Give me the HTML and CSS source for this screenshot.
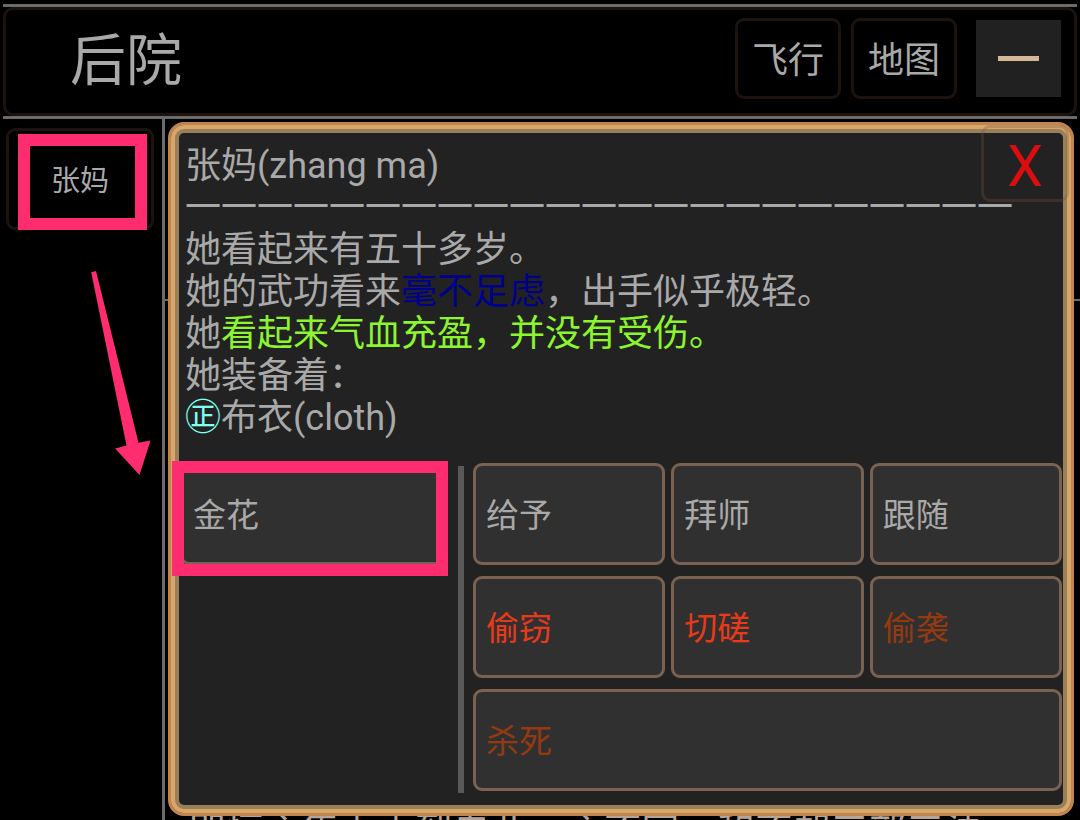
FILE: index.html
```html
<!DOCTYPE html>
<html lang="zh-CN">
<head>
  <meta charset="UTF-8">
  <meta name="viewport" content="width=device-width, initial-scale=1.0">
  <title>后院</title>
  <link rel="stylesheet" href="styles.css">
</head>

<body>

  <header class="topbar">
    <div class="topbar-inner">
      <h1 class="room-name">后院</h1>
      <button class="top-button">飞行</button>
      <button class="top-button">地图</button>
      <button class="minimize"><span class="minimize-line"></span></button>
    </div>
  </header>

  <main class="main">
    <div class="sidebar">
      <button class="npc-button">张妈</button>
    </div>

    <div class="content">
      <div class="dialog">
        <button class="close-button">X</button>
        <div class="description">
          <p>张妈(zhang ma)</p>
          <p>一一一一一一一一一一一一一一一一一一一一一一一</p>
          <p>她看起来有五十多岁。</p>
          <p>她的武功看来<span class="blue">毫不足虑</span>，出手似乎极轻。</p>
          <p>她<span class="green">看起来气血充盈，并没有受伤。</span></p>
          <p>她装备着：</p>
          <p><span class="cyan">㊣</span>布衣(cloth)</p>
        </div>

        <div class="actions">
          <div class="topics">
            <button class="action">金花</button>
          </div>
          <div class="divider"></div>
          <div class="commands">
            <button class="action">给予</button>
            <button class="action">拜师</button>
            <button class="action">跟随</button>
            <button class="action red">偷窃</button>
            <button class="action red">切磋</button>
            <button class="action brown">偷袭</button>
            <button class="action brown wide">杀死</button>
          </div>
        </div>
      </div>

      <p class="log">即恒主集上山到自此一主不容，和不却三部三法</p>
    </div>
  </main>

  <!-- Guide marks -->
  <div class="mark mark-npc"></div>
  <div class="mark mark-topic"></div>
  <svg class="arrow" width="62" height="210" viewBox="0 0 62 210">
    <path d="M1.2 2.2 L6 1 L48.5 172.8 L60.5 170.5 L49.5 205 L25.2 178.5 L36.5 175.5 Z" fill="#ff2d70"/>
  </svg>

</body>
</html>
```

FILE: styles.css
```css
* {
  margin: 0;
  padding: 0;
  box-sizing: border-box;
}

body {
  height: 820px;
  padding-top: 4px;
  display: flex;
  flex-direction: column;
  overflow: hidden;
  background-color: #000;
  color: #a9a9a9;
  font-family: Roboto, "Noto Sans CJK SC", sans-serif;
}

button {
  font-family: inherit;
  color: inherit;
  background: none;
  border: 3px solid #1c130f;
  border-radius: 9px;
}

/* Top bar */
.topbar {
  height: 115px;
  flex: none;
  margin: 0 3px;
  border-top: 3px solid #6b6b6b;
  border-bottom: 3px solid #6b6b6b;
}

.topbar-inner {
  height: 109px;
  display: flex;
  align-items: flex-start;
  border: 3px solid #1c130f;
  border-radius: 10px;
  padding: 8px 11px 0 64px;
}

.room-name {
  flex: 1;
  padding-top: 3px;
  font-size: 56px;
  font-weight: normal;
  line-height: 80px;
}

.top-button {
  width: 106px;
  height: 81px;
  margin-right: 10px;
  padding-bottom: 3px;
  font-size: 36px;
}

.minimize {
  width: 85px;
  height: 77px;
  margin: 2px 2px 0 9px;
  border: none;
  border-radius: 0;
  background-color: #212121;
  display: flex;
  align-items: center;
  justify-content: center;
}

.minimize-line {
  width: 41px;
  height: 5px;
  background-color: #d4b896;
}

/* Main area */
.main {
  flex: 1;
  min-height: 0;
  display: flex;
}

.sidebar {
  width: 165px;
  flex: none;
  padding: 9px 8px 0 6px;
  border-right: 3px solid #6b6b6b;
}

.npc-button {
  width: 148px;
  height: 102px;
  padding-bottom: 2px;
  font-size: 29px;
}

.content {
  flex: 1;
  min-width: 0;
  padding: 3px 6px 0 3px;
  overflow: hidden;
  background: linear-gradient(#6b6b6b, #6b6b6b) 0 180px / 100% 2px no-repeat;
}

/* Dialog, the frame has three tones */
.dialog {
  position: relative;
  height: 694px;
  padding: 20px 9px 0 9px;
  border: 3px solid #c08650;
  border-radius: 16px;
  background-color: #222;
  box-shadow: inset 0 0 0 4px #daa568, inset 0 0 0 8px #98805a;
}

.description {
  padding-left: 5px;
  font-size: 36px;
  line-height: 42px;
  white-space: nowrap;
}

.blue {
  color: #00008b;
}

.green {
  color: #8cf52f;
}

.cyan {
  color: #80fff0;
}

.close-button {
  position: absolute;
  top: 0;
  right: 2px;
  width: 88px;
  height: 77px;
  padding-top: 7px;
  border-color: rgba(120, 85, 65, 0.3);
  font-size: 57px;
  line-height: 64px;
  color: #dc0d0d;
}

.actions {
  display: flex;
  margin-top: 24px;
}

.topics {
  width: 266px;
}

.divider {
  width: 6px;
  height: 327px;
  margin: 3px 9px 0 12px;
  background-color: #595959;
}

.commands {
  flex: 1;
  display: grid;
  grid-template-columns: repeat(3, 1fr);
  grid-auto-rows: 102px;
  align-content: start;
  gap: 11px 6px;
}

.action {
  width: 100%;
  height: 102px;
  padding-left: 10px;
  padding-bottom: 3px;
  border-color: #796251;
  background-color: #303030;
  font-size: 33px;
  text-align: left;
}

.wide {
  grid-column: span 3;
}

.red {
  color: #e83a1a;
}

.brown {
  color: #953911;
}

/* The running log continues under the dialog */
.log {
  margin-top: -6px;
  padding-left: 20px;
  font-size: 37.8px;
  line-height: 42px;
  white-space: nowrap;
  color: #b5a598;
}

/* Guide marks lie over the page */
.mark {
  position: absolute;
  border: 12px solid #ff2d70;
}

.mark-npc {
  left: 18px;
  top: 134px;
  width: 129px;
  height: 96px;
}

.mark-topic {
  left: 172px;
  top: 461px;
  width: 276px;
  height: 115px;
}

.arrow {
  position: absolute;
  left: 90px;
  top: 270px;
}
```
